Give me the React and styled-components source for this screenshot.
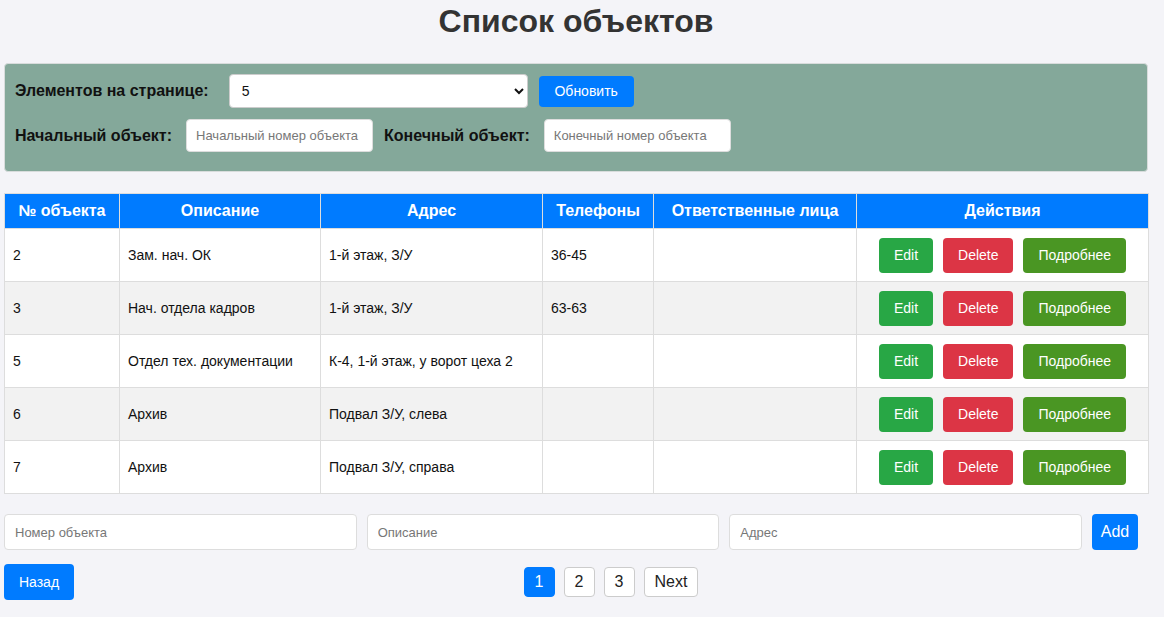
import React from "react";
import styled, { createGlobalStyle } from "styled-components";

const Global = createGlobalStyle`
  html, body { margin: 0; padding: 0; background: #f4f4f8; }
  body { font-family: "Liberation Sans", Arial, sans-serif; color: #111; }
  * { box-sizing: border-box; }
`;

const Page = styled.div`
  padding: 0 16px 0 4px;
  width: 1164px;
`;

const Title = styled.h1`
  margin: 3px 0 23px;
  font-size: 32px;
  line-height: 37px;
  font-weight: bold;
  color: #333;
  text-align: center;
`;

const Panel = styled.div`
  background: #84a89a;
  border: 1px solid #d8dcdc;
  border-radius: 4px;
  padding: 10px 10px 19px;
  display: flex;
  flex-direction: column;
  gap: 11px;
`;

const Row = styled.div`
  display: flex;
  align-items: center;
`;

const Label = styled.label`
  font-size: 16px;
  font-weight: bold;
  color: #111;
  margin-right: ${(p) => p.$mr}px;
`;

const Select = styled.select`
  width: 299px;
  height: 34px;
  border: 1px solid #ccc;
  border-radius: 4px;
  background: #fff;
  font-family: "Liberation Sans", Arial, sans-serif;
  font-size: 14px;
  padding: 0 8px;
  color: #111;
`;

const BlueButton = styled.button`
  background: #007bff;
  color: #fff;
  border: none;
  border-radius: 4px;
  font-family: "Liberation Sans", Arial, sans-serif;
  font-size: ${(p) => p.$fs || 14}px;
  width: ${(p) => p.$w}px;
  height: ${(p) => p.$h}px;
  margin-left: ${(p) => p.$ml || 0}px;
  padding: 0;
  cursor: pointer;
`;

const SmallInput = styled.input`
  width: 187px;
  height: 33px;
  border: 1px solid #ddd;
  border-radius: 4px;
  background: #fff;
  padding: 0 9px;
  font-family: "Liberation Sans", Arial, sans-serif;
  font-size: 13px;
  margin-right: ${(p) => p.$mr || 0}px;
  &::placeholder { color: #777; }
`;

const Table = styled.table`
  margin-top: 21px;
  width: 100%;
  border-collapse: collapse;
  border: 1px solid #ddd;
  table-layout: fixed;
`;

const Th = styled.th`
  background: #007bff;
  color: #fff;
  font-size: 16px;
  font-weight: bold;
  height: 35px;
  padding: 0 8px;
  border: 1px solid #ddd;
  text-align: center;
  width: ${(p) => p.$w}px;
`;

const Tr = styled.tr`
  background: ${(p) => (p.$alt ? "#f2f2f2" : "#fff")};
`;

const Td = styled.td`
  height: 53px;
  padding: 0 8px;
  border: 1px solid #ddd;
  font-size: 14px;
  color: #111;
  text-align: ${(p) => (p.$center ? "center" : "left")};
`;

const Actions = styled.div`
  display: flex;
  justify-content: center;
  gap: 10px;
`;

const ActionButton = styled.button`
  background: ${(p) => p.$bg};
  color: #fff;
  border: none;
  border-radius: 4px;
  height: 35px;
  padding: 0 15px;
  font-family: "Liberation Sans", Arial, sans-serif;
  font-size: 14px;
  cursor: pointer;
`;

const AddForm = styled.div`
  margin-top: 20px;
  display: flex;
  align-items: center;
  gap: 10px;
  padding-right: 10px;
`;

const WideInput = styled.input`
  flex: 1;
  min-width: 0;
  height: 36px;
  border: 1px solid #ddd;
  border-radius: 4px;
  background: #fff;
  padding: 0 10px;
  font-family: "Liberation Sans", Arial, sans-serif;
  font-size: 13px;
  &::placeholder { color: #777; }
`;

const Footer = styled.div`
  margin-top: 14px;
  display: flex;
  align-items: center;
`;

const Pagination = styled.div`
  flex: 1;
  display: flex;
  justify-content: center;
  align-items: center;
  gap: 9px;
`;

const PageButton = styled.button`
  height: 30px;
  min-width: 31px;
  padding: 0 ${(p) => (p.$wide ? 10 : 9)}px;
  border-radius: 4px;
  border: 1px solid ${(p) => (p.$active ? "#007bff" : "#ccc")};
  background: ${(p) => (p.$active ? "#007bff" : "#fff")};
  color: ${(p) => (p.$active ? "#fff" : "#222")};
  font-family: "Liberation Sans", Arial, sans-serif;
  font-size: 16px;
  cursor: pointer;
`;

const rows = [
  ["2", "Зам. нач. ОК", "1-й этаж, З/У", "36-45", ""],
  ["3", "Нач. отдела кадров", "1-й этаж, З/У", "63-63", ""],
  ["5", "Отдел тех. документации", "К-4, 1-й этаж, у ворот цеха 2", "", ""],
  ["6", "Архив", "Подвал З/У, слева", "", ""],
  ["7", "Архив", "Подвал З/У, справа", "", ""],
];

const cols = [
  ["№ объекта", 115],
  ["Описание", 201],
  ["Адрес", 222],
  ["Телефоны", 111],
  ["Ответственные лица", 203],
  ["Действия", 292],
];

export default function App() {
  return (
    <Page>
      <Global />
      <Title>Список объектов</Title>
      <Panel>
        <Row>
          <Label $mr={20}>Элементов на странице:</Label>
          <Select defaultValue="5">
            <option value="5">5</option>
            <option value="10">10</option>
            <option value="20">20</option>
          </Select>
          <BlueButton $w={95} $h={31} $ml={11}>Обновить</BlueButton>
        </Row>
        <Row>
          <Label $mr={14}>Начальный объект:</Label>
          <SmallInput placeholder="Начальный номер объекта" $mr={11} />
          <Label $mr={14}>Конечный объект:</Label>
          <SmallInput placeholder="Конечный номер объекта" />
        </Row>
      </Panel>

      <Table>
        <thead>
          <tr>
            {cols.map(([c, w]) => (
              <Th key={c} $w={w}>{c}</Th>
            ))}
          </tr>
        </thead>
        <tbody>
          {rows.map((r, i) => (
            <Tr key={r[0]} $alt={i % 2 === 1}>
              {r.map((v, j) => (
                <Td key={j}>{v}</Td>
              ))}
              <Td $center>
                <Actions>
                  <ActionButton $bg="#28a745">Edit</ActionButton>
                  <ActionButton $bg="#dc3545">Delete</ActionButton>
                  <ActionButton $bg="#4a9623">Подробнее</ActionButton>
                </Actions>
              </Td>
            </Tr>
          ))}
        </tbody>
      </Table>

      <AddForm>
        <WideInput placeholder="Номер объекта" />
        <WideInput placeholder="Описание" />
        <WideInput placeholder="Адрес" />
        <BlueButton $w={46} $h={36} $fs={16}>Add</BlueButton>
      </AddForm>

      <Footer>
        <BlueButton $w={70} $h={36}>Назад</BlueButton>
        <Pagination>
          <PageButton $active>1</PageButton>
          <PageButton>2</PageButton>
          <PageButton>3</PageButton>
          <PageButton $wide>Next</PageButton>
        </Pagination>
      </Footer>
    </Page>
  );
}
